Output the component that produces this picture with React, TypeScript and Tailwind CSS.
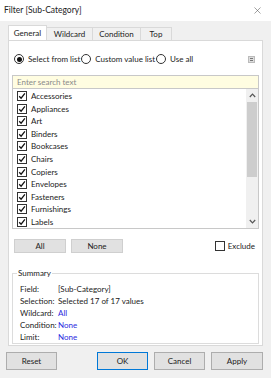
import { X } from 'lucide-react'

const items = [
  'Accessories',
  'Appliances',
  'Art',
  'Binders',
  'Bookcases',
  'Chairs',
  'Copiers',
  'Envelopes',
  'Fasteners',
  'Furnishings',
  'Labels',
]

function Check({ on = true }: { on?: boolean }) {
  return (
    <span className="w-[10px] h-[10px] border border-[#333] bg-white flex items-center justify-center shrink-0">
      {on && (
        <svg width="8" height="8" viewBox="0 0 8 8">
          <path d="M1.2 4.2 L3.1 6.2 L6.9 1.4" stroke="#111" strokeWidth="1.3" fill="none" />
        </svg>
      )}
    </span>
  )
}

function Radio({ on = false }: { on?: boolean }) {
  return (
    <span className="w-[10px] h-[10px] rounded-full border border-[#333] bg-white flex items-center justify-center shrink-0">
      {on && <span className="w-[5px] h-[5px] rounded-full bg-[#111]" />}
    </span>
  )
}

function Btn({ label, w, primary }: { label: string; w: string; primary?: boolean }) {
  return (
    <div
      className={`${w} h-[18px] flex items-center justify-center bg-[#e1e1e1] border ${
        primary ? 'border-[#0078d7]' : 'border-[#adadad]'
      }`}
    >
      {label}
    </div>
  )
}

export default function App() {
  return (
    <div
      className="w-[271px] h-[378px] bg-[#f0f0f0] text-[8px] text-[#222] leading-none overflow-hidden"
      style={{ fontFamily: 'Lato, "Noto Sans", sans-serif' }}
    >
      {/* title bar */}
      <div className="h-[21px] bg-white flex items-center justify-between pl-[4px] pr-[8px]">
        <span className="text-[8.5px] text-[#222]">Filter [Sub-Category]</span>
        <X size={11} strokeWidth={1.2} className="text-[#555]" />
      </div>

      {/* tabs */}
      <div className="flex mt-[5px] ml-[8px] h-[14px] items-end">
        <div className="h-[15px] w-[39px] bg-white border border-b-0 border-[#d9d9d9] flex items-center justify-center">General</div>
        <div className="h-[13px] w-[46px] border border-b-0 border-l-0 border-[#d9d9d9] flex items-center justify-center">Wildcard</div>
        <div className="h-[13px] w-[48px] border border-b-0 border-l-0 border-[#d9d9d9] flex items-center justify-center">Condition</div>
        <div className="h-[13px] w-[31px] border border-b-0 border-l-0 border-[#d9d9d9] flex items-center justify-center">Top</div>
      </div>

      {/* panel */}
      <div className="mx-[8px] h-[306px] bg-white border border-[#d9d9d9] flex flex-col px-[3px]">
        <div className="flex items-center h-[12px] mt-[12px] pl-[2px] pr-[4px]">
          <div className="flex items-center gap-[4px]">
            <Radio on />
            <span>Select from list</span>
          </div>
          <div className="flex items-center gap-[4px] ml-[1px]">
            <Radio />
            <span>Custom value list</span>
          </div>
          <div className="flex items-center gap-[4px] ml-[1px]">
            <Radio />
            <span>Use all</span>
          </div>
          <div className="ml-auto w-[7px] h-[7px] bg-[#ddd] border border-[#bbb] flex flex-col justify-center gap-[1px] px-[1px]">
            <span className="h-px bg-[#777]" />
            <span className="h-px bg-[#777]" />
          </div>
        </div>

        <div className="mt-[10px] h-[14px] bg-[#fffde1] border border-[#c8c8c8] flex items-center px-[4px] text-[#8a8a8a]">
          Enter search text
        </div>

        <div className="h-[140px] border border-t-0 border-[#c8c8c8] flex">
          <div className="flex-1 flex flex-col pl-[4px] pt-[1px]">
            {items.map((it) => (
              <div key={it} className="h-[12.7px] flex items-center gap-[4px]">
                <Check />
                <span>{it}</span>
              </div>
            ))}
          </div>
          <div className="w-[12px] bg-[#f0f0f0] flex flex-col items-center">
            <span className="h-[13px] flex items-center text-[#555]">
              <svg width="7" height="5" viewBox="0 0 7 5">
                <path d="M0.8 4 L3.5 1.2 L6.2 4" stroke="#555" strokeWidth="1.2" fill="none" />
              </svg>
            </span>
            <span className="w-[10px] h-[75px] bg-[#cdcdcd]" />
            <span className="flex-1" />
            <span className="h-[13px] flex items-center">
              <svg width="7" height="5" viewBox="0 0 7 5">
                <path d="M0.8 1 L3.5 3.8 L6.2 1" stroke="#555" strokeWidth="1.2" fill="none" />
              </svg>
            </span>
          </div>
        </div>

        <div className="flex items-center mt-[10px] h-[14px] pl-[2px] pr-[4px]">
          <div className="w-[52px] h-[14px] bg-[#e1e1e1] border border-[#cfcfcf] flex items-center justify-center">All</div>
          <div className="w-[52px] h-[14px] bg-[#e1e1e1] border border-[#cfcfcf] flex items-center justify-center ml-[5px]">None</div>
          <div className="ml-auto flex items-center gap-[3px]">
            <Check on={false} />
            <span>Exclude</span>
          </div>
        </div>

        <div className="relative mt-[20px] h-[71px] border border-[#dcdcdc] pt-[10px] pl-[7px]">
          <span className="absolute left-[4px] top-[-5px] bg-white px-[1px]">Summary</span>
          <div className="grid grid-cols-[38px_1fr] gap-y-[3px] [&>span]:h-[9px] [&>span]:flex [&>span]:items-center">
            <span>Field:</span>
            <span>[Sub-Category]</span>
            <span>Selection:</span>
            <span>Selected 17 of 17 values</span>
            <span>Wildcard:</span>
            <span className="text-[#2a2ae0]">All</span>
            <span>Condition:</span>
            <span className="text-[#2a2ae0]">None</span>
            <span>Limit:</span>
            <span className="text-[#2a2ae0]">None</span>
          </div>
        </div>
      </div>

      {/* footer */}
      <div className="flex items-center mt-[6px] px-[6px]">
        <Btn label="Reset" w="w-[51px]" />
        <div className="ml-auto flex gap-[6px] mr-[2px]">
          <Btn label="OK" w="w-[51px]" primary />
          <Btn label="Cancel" w="w-[51px]" />
          <Btn label="Apply" w="w-[52px]" />
        </div>
      </div>
    </div>
  )
}
